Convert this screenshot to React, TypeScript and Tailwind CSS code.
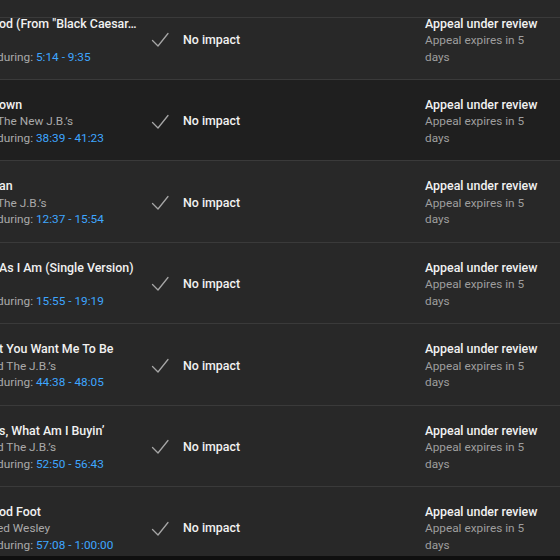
import React from 'react';

interface ClaimRow {
  title: string;
  artist: string;
  range: string;
  hovered?: boolean;
}

const rows: ClaimRow[] = [
  { title: 'od (From "Black Caesar…', artist: '', range: '5:14 - 9:35' },
  { title: 'own', artist: 'The New J.B.’s', range: '38:39 - 41:23', hovered: true },
  { title: 'an', artist: 'The J.B.’s', range: '12:37 - 15:54' },
  { title: 'As I Am (Single Version)', artist: '', range: '15:55 - 19:19' },
  { title: 't You Want Me To Be', artist: 'd The J.B.’s', range: '44:38 - 48:05' },
  { title: 's, What Am I Buyin’', artist: 'd The J.B.’s', range: '52:50 - 56:43' },
  { title: 'od Foot', artist: 'ed Wesley', range: '57:08 - 1:00:00' },
];

const CheckIcon: React.FC = () => (
  <svg width="24" height="24" viewBox="0 0 24 24" fill="none">
    <polyline
      points="4.5,12.5 10,18 20,5.5"
      stroke="#a6a6a6"
      strokeWidth="1.3"
      strokeLinecap="round"
      strokeLinejoin="round"
    />
  </svg>
);

const Row: React.FC<{ row: ClaimRow }> = ({ row }) => (
  <div
    className={`flex h-[81.4px] shrink-0 items-center border-b border-[#3a3a3a] pt-[3px] ${
      row.hovered ? 'bg-[#1f1f1f]' : 'bg-[#282828]'
    }`}
  >
    <div className="w-[148px] shrink-0 overflow-hidden whitespace-nowrap leading-[16.5px]">
      <div className="-ml-[1px] text-[12.4px] font-medium text-[#f1f1f1]">{row.title}</div>
      <div className="h-[16.5px] -ml-[3px] text-[11.8px] text-[#aaaaaa]">{row.artist}</div>
      <div className="-ml-[3px] text-[11.8px] text-[#aaaaaa]">
        during: <span className="text-[#3ea6ff]">{row.range}</span>
      </div>
    </div>
    <div className="flex w-[277px] shrink-0 items-center gap-[11px]">
      <CheckIcon />
      <span className="text-[12.4px] font-medium text-[#f1f1f1]">No impact</span>
    </div>
    <div className="w-[114px] shrink-0 leading-[16.5px]">
      <div className="text-[12.4px] font-medium text-[#f1f1f1]">Appeal under review</div>
      <div className="text-[11.8px] text-[#9e9e9e]">Appeal expires in 5 days</div>
    </div>
  </div>
);

const App: React.FC = () => {
  return (
    <div
      className="relative h-[560px] w-[560px] overflow-hidden bg-[#0f0f0f]"
      style={{ fontFamily: 'Roboto, "Liberation Sans", sans-serif' }}
    >
      <div className="-mt-[1.4px] flex h-[557.4px] flex-col overflow-hidden bg-[#282828]">
        {rows.map((row, i) => (
          <Row key={i} row={row} />
        ))}
      </div>
      <div className="absolute left-0 right-0 top-[17px] h-px bg-[#3a3a3a]" />
    </div>
  );
};

export default App;
